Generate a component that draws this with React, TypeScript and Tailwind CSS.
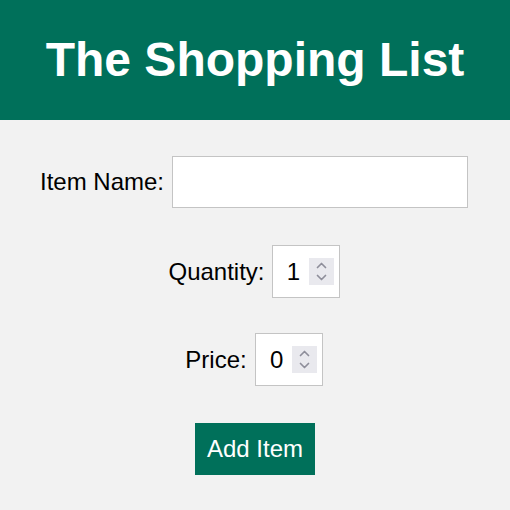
import React, { useState } from 'react';

function NumberField({ value, onChange }: { value: number; onChange: (v: number) => void }) {
  return (
    <div className="w-[68px] h-[53px] bg-white border border-[#c4c4c4] flex items-center pl-[6px] pr-[5px]">
      <input
        type="number"
        value={value}
        onChange={(e) => onChange(Number(e.target.value))}
        className="flex-1 min-w-0 h-full bg-transparent text-[24px] text-center outline-none [appearance:textfield] [&::-webkit-inner-spin-button]:appearance-none [&::-webkit-outer-spin-button]:appearance-none"
      />
      <div className="w-[25px] h-[27px] bg-[#e9e9ee] flex flex-col items-center justify-center gap-[5px]">
        <button type="button" onClick={() => onChange(value + 1)} className="flex">
          <svg width="11" height="7" viewBox="0 0 11 7" fill="none" stroke="#8e8e9a" strokeWidth="1.7" strokeLinecap="round" strokeLinejoin="round">
            <path d="M1.5 5.5L5.5 1.5L9.5 5.5" />
          </svg>
        </button>
        <button type="button" onClick={() => onChange(value - 1)} className="flex">
          <svg width="11" height="7" viewBox="0 0 11 7" fill="none" stroke="#8e8e9a" strokeWidth="1.7" strokeLinecap="round" strokeLinejoin="round">
            <path d="M1.5 1.5L5.5 5.5L9.5 1.5" />
          </svg>
        </button>
      </div>
    </div>
  );
}

export default function App() {
  const [name, setName] = useState('');
  const [quantity, setQuantity] = useState(1);
  const [price, setPrice] = useState(0);

  return (
    <div className="min-h-screen bg-[#f2f2f2] font-['Liberation_Sans',Arial,sans-serif] text-black">
      {/* Header */}
      <header className="h-[120px] bg-[#00705a] flex items-center justify-center">
        <h1 className="text-[48px] font-bold text-white leading-none">The Shopping List</h1>
      </header>

      <form
        className="flex flex-col items-center pt-[36px] pr-[2px]"
        onSubmit={(e) => e.preventDefault()}
      >
        <div className="flex items-center gap-[8px]">
          <label className="text-[24px]">Item Name:</label>
          <input
            type="text"
            value={name}
            onChange={(e) => setName(e.target.value)}
            className="w-[296px] h-[52px] bg-white border border-[#c4c4c4] px-2 text-[24px] outline-none"
          />
        </div>

        <div className="flex items-center gap-[7px] mt-[37px]">
          <label className="text-[24px]">Quantity:</label>
          <NumberField value={quantity} onChange={setQuantity} />
        </div>

        <div className="flex items-center gap-[8px] mt-[35px]">
          <label className="text-[24px]">Price:</label>
          <NumberField value={price} onChange={setPrice} />
        </div>

        <button
          type="submit"
          className="mt-[37px] ml-[2px] w-[120px] h-[52px] bg-[#00705a] text-white text-[24px]"
        >
          Add Item
        </button>
      </form>
    </div>
  );
}
